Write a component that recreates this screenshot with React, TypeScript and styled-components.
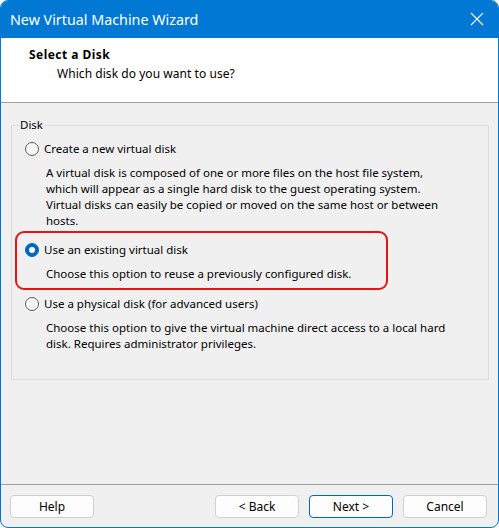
import React from "react";
import styled, { createGlobalStyle } from "styled-components";

const Global = createGlobalStyle`
  html, body { margin: 0; padding: 0; background: #ffffff; }
  * { box-sizing: border-box; }
`;

const FONT = `"Noto Sans", "Open Sans", sans-serif`;

const Window = styled.div`
  width: 499px;
  height: 528px;
  border: 1px solid #0078d4;
  border-radius: 8px;
  overflow: hidden;
  display: flex;
  flex-direction: column;
  background: #f0f0f0;
  font-family: ${FONT};
  font-size: 11.5px;
  color: #000;
`;

const TitleBar = styled.div`
  height: 37px;
  flex: none;
  background: #0078d4;
  color: #fff;
  display: flex;
  align-items: center;
  justify-content: space-between;
  padding: 0 14px 1px 9px;
  font-size: 14.3px;
`;

const CloseBtn = styled.div`
  width: 14px;
  height: 14px;
  display: flex;
  align-items: center;
  justify-content: center;
`;

const Header = styled.div`
  height: 65px;
  flex: none;
  background: #fff;
  border-bottom: 1px solid #a0a0a0;
  padding: 9px 0 0 28px;
  display: flex;
  flex-direction: column;
  gap: 3px;
`;

const HeaderTitle = styled.div`
  font-weight: 700;
  font-size: 12px;
  letter-spacing: 0.45px;
  line-height: 16px;
`;

const HeaderSub = styled.div`
  line-height: 16px;
  padding-left: 28px;
  font-size: 12px;
  letter-spacing: 0.05px;
`;

const Body = styled.div`
  flex: 1;
  padding: 14px 9px 0 10px;
  display: flex;
  flex-direction: column;
`;

const Group = styled.fieldset`
  margin: 0;
  border: 1px solid #dcdcdc;
  border-radius: 0;
  padding: 8px 12px 27px 13px;
  min-width: 0;
  display: flex;
  flex-direction: column;
  gap: 13px;
`;

const Legend = styled.legend`
  margin-left: -6px;
  padding: 0 1px;
  line-height: 16px;
`;

const Option = styled.div<{ $highlight?: boolean }>`
  display: flex;
  flex-direction: column;
  gap: 8px;
  ${(p) =>
    p.$highlight
      ? `
    border: 2px solid #ee1111;
    border-radius: 9px;
    margin: -11px 88px -7px -10px;
    padding: 9px 0 6px 8px;
  `
      : ""}
`;

const OptionLabel = styled.label`
  display: flex;
  align-items: center;
  gap: 5px;
  line-height: 16px;
`;

const Radio = styled.span<{ $checked?: boolean }>`
  width: 14px;
  height: 14px;
  border-radius: 50%;
  flex: none;
  display: flex;
  align-items: center;
  justify-content: center;
  background: ${(p) => (p.$checked ? "#0067c0" : "#f7f7f7")};
  border: 1px solid ${(p) => (p.$checked ? "#0067c0" : "#5c5c5c")};
  &::after {
    content: "";
    display: ${(p) => (p.$checked ? "block" : "none")};
    width: 6px;
    height: 6px;
    border-radius: 50%;
    background: #fff;
  }
`;

const Desc = styled.div`
  padding-left: 21px;
  line-height: 16px;
  white-space: pre-line;
`;

const Footer = styled.div`
  flex: none;
  border-top: 1px solid #a0a0a0;
  padding: 10px 11px 9px 9px;
  display: flex;
  align-items: center;
  gap: 10px;
`;

const Spacer = styled.div`
  flex: 1;
`;

const Button = styled.button<{ $default?: boolean }>`
  width: 84px;
  height: 23px;
  font-family: ${FONT};
  font-size: 12px;
  color: #000;
  background: #fdfdfd;
  border: 1px solid ${(p) => (p.$default ? "#0067c0" : "#d0d0d0")};
  border-radius: 4px;
  padding: 0 0 1px;
`;

const options = [
  {
    label: "Create a new virtual disk",
    desc:
      "A virtual disk is composed of one or more files on the host file system,\nwhich will appear as a single hard disk to the guest operating system.\nVirtual disks can easily be copied or moved on the same host or between\nhosts.",
    checked: false,
  },
  {
    label: "Use an existing virtual disk",
    desc: "Choose this option to reuse a previously configured disk.",
    checked: true,
  },
  {
    label: "Use a physical disk (for advanced users)",
    desc:
      "Choose this option to give the virtual machine direct access to a local hard\ndisk. Requires administrator privileges.",
    checked: false,
  },
];

export default function App() {
  return (
    <>
      <Global />
      <Window>
        <TitleBar>
          <span>New Virtual Machine Wizard</span>
          <CloseBtn>
            <svg width="14" height="14" viewBox="0 0 14 14">
              <path d="M1 1 L13 13 M13 1 L1 13" stroke="#fff" strokeWidth="1.1" fill="none" />
            </svg>
          </CloseBtn>
        </TitleBar>
        <Header>
          <HeaderTitle>Select a Disk</HeaderTitle>
          <HeaderSub>Which disk do you want to use?</HeaderSub>
        </Header>
        <Body>
          <Group>
            <Legend>Disk</Legend>
            {options.map((o) => (
              <Option key={o.label} $highlight={o.checked}>
                <OptionLabel>
                  <Radio $checked={o.checked} />
                  {o.label}
                </OptionLabel>
                <Desc>{o.desc}</Desc>
              </Option>
            ))}
          </Group>
        </Body>
        <Footer>
          <Button>Help</Button>
          <Spacer />
          <Button>&lt; Back</Button>
          <Button $default>Next &gt;</Button>
          <Button>Cancel</Button>
        </Footer>
      </Window>
    </>
  );
}
